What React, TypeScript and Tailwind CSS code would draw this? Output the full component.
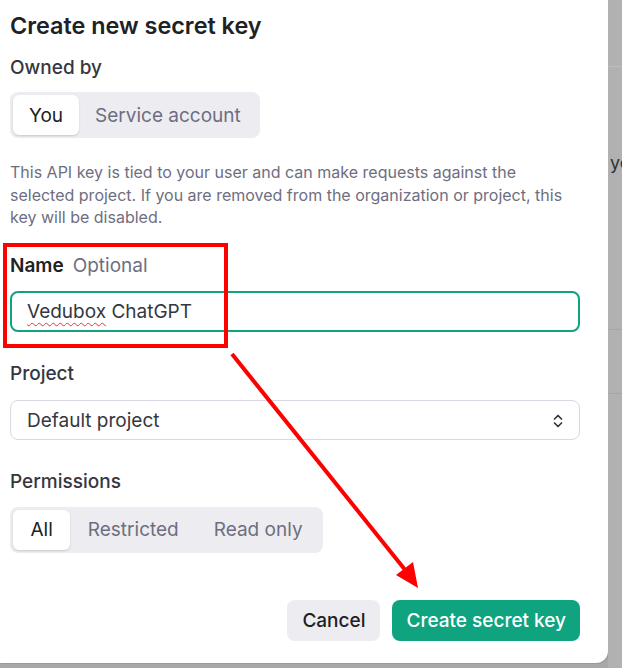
import React from 'react';

const font = { fontFamily: 'Inter, "Noto Sans", sans-serif' };

const Segmented: React.FC<{ options: string[]; active: number; pad: string }> = ({ options, active, pad }) => (
    <div className="inline-flex p-[3px] rounded-[8px] bg-[#ececf1]">
        {options.map((o, i) => (
            <div
                key={o}
                className={`${pad} h-[40px] pt-[2px] flex items-center rounded-[6px] text-[19px] ${i === active ? 'bg-white text-[#202123] shadow-[0_1px_2px_rgba(0,0,0,0.15)]' : 'text-[#6e6e80]'}`}
            >
                {o}
            </div>
        ))}
    </div>
);

const ChevronsUpDown = () => (
    <svg width="10" height="14" viewBox="0 0 10 14" fill="none" stroke="#353740" strokeWidth="1.7" strokeLinecap="round" strokeLinejoin="round">
        <path d="M1.5 5 L5 1.5 L8.5 5" />
        <path d="M1.5 9 L5 12.5 L8.5 9" />
    </svg>
);

const App: React.FC = () => {
    return (
        <div className="relative w-[622px] h-[668px] bg-[#a8a8a8] overflow-hidden flex items-start" style={font}>
            <div className="w-[608px] h-[663px] bg-white rounded-br-[12px] pl-[10px] pr-[28px] pt-[11px] flex flex-col shadow-[1px_1px_0_rgba(0,0,0,0.08)]">
                <h2 className="text-[23.4px] leading-[30px] font-semibold text-[#202123]">Create new secret key</h2>

                <div className="mt-[15px] text-[19px] leading-[24px] font-medium text-[#353740]">Owned by</div>
                <div className="mt-[12px]">
                    <Segmented options={['You', 'Service account']} active={0} pad="px-[16px]" />
                </div>

                <p className="mt-[23px] text-[16px] leading-[22.5px] text-[#6e6e80] whitespace-nowrap">
                    This API key is tied to your user and can make requests against the<br />
                    selected project. If you are removed from the organization or project, this<br />
                    key will be disabled.
                </p>

                <div className="mt-[25px] text-[19px] leading-[24px] flex gap-[9px]">
                    <span className="font-semibold text-[#202123]">Name</span>
                    <span className="text-[#6e6e80]">Optional</span>
                </div>
                <div className="mt-[13px] h-[41px] pt-[3px] rounded-[8px] border-2 border-[#10a37f] flex items-center px-[15px] text-[19px] text-[#353740]">
                    <span className="underline decoration-wavy decoration-[#e53935] decoration-1 underline-offset-[4px]">Vedubox</span>
                    <span>&nbsp;ChatGPT</span>
                </div>

                <div className="mt-[30px] text-[19px] leading-[24px] font-medium text-[#353740]">Project</div>
                <div className="mt-[14px] h-[40px] pt-[3px] rounded-[8px] border border-[#d9d9e3] flex items-center justify-between pl-[16px] pr-[16px] text-[19px] text-[#353740]">
                    <span>Default project</span>
                    <ChevronsUpDown />
                </div>

                <div className="mt-[30px] text-[19px] leading-[24px] font-medium text-[#353740]">Permissions</div>
                <div className="mt-[13px]">
                    <Segmented options={['All', 'Restricted', 'Read only']} active={0} pad="px-[17.5px]" />
                </div>

                <div className="mt-[47px] flex justify-end gap-[12px]">
                    <button className="h-[41px] pt-[3px] px-[15px] rounded-[8px] bg-[#ececf1] text-[19px] font-medium text-[#202123]">Cancel</button>
                    <button className="h-[41px] pt-[3px] px-[14px] rounded-[8px] bg-[#10a37f] text-[19px] font-medium text-white">Create secret key</button>
                </div>
            </div>

            <div className="flex-1 h-full bg-[#b1b1b1] flex flex-col overflow-hidden">
                <div className="mt-[66px] h-px bg-[#bdbdbd]" />
                <div className="mt-[84px] pl-[2px] text-[18px] leading-[24px] text-[#333333] whitespace-nowrap">you</div>
                <div className="mt-[154px] h-px bg-[#a6a6a6]" />
                <div className="mt-[63px] h-px bg-[#a6a6a6]" />
            </div>

            {/* annotation overlay */}
            <div className="absolute left-[3px] top-[243px] w-[225px] h-[105px] border-4 border-[#ff0000] pointer-events-none" />
            <svg className="absolute left-0 top-0 pointer-events-none" width="622" height="668">
                <line x1="232" y1="354" x2="406" y2="571" stroke="#ff0000" strokeWidth="4" />
                <polygon points="418,588 396,575 413,562" fill="#ff0000" />
            </svg>
        </div>
    );
};

export default App;
